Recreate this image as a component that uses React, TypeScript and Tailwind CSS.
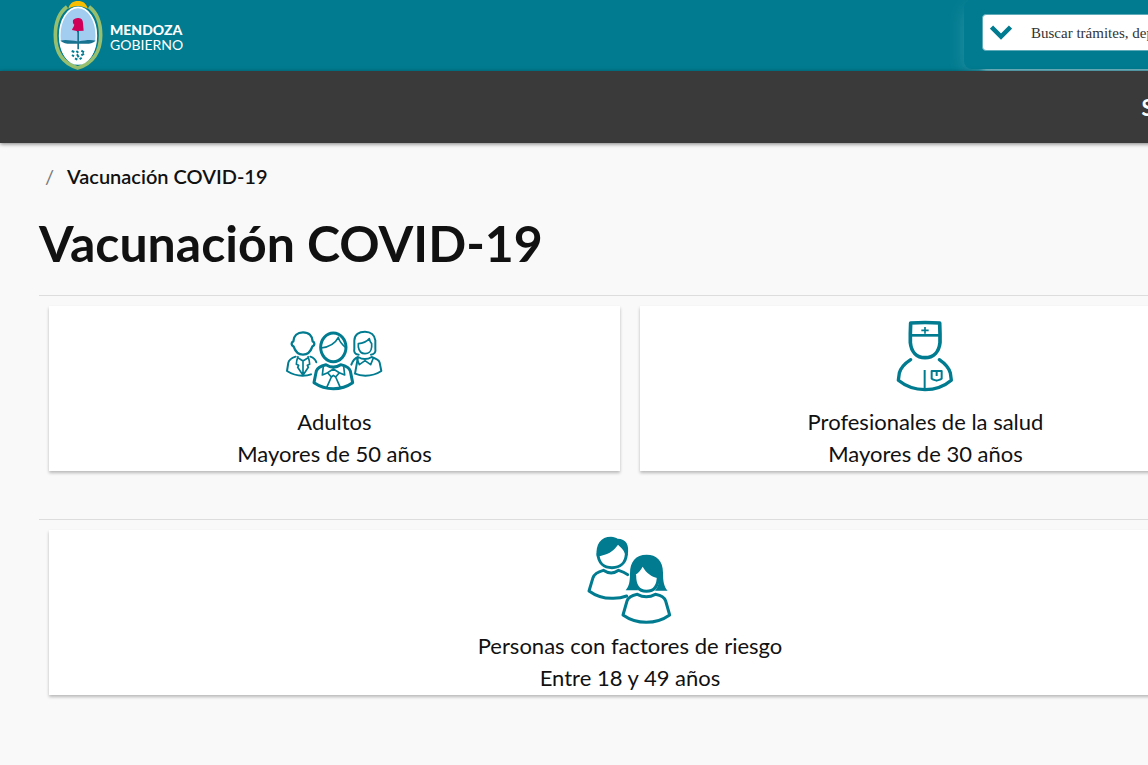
import type { ReactNode } from "react";

const TEAL = "#007b90";

function Crest() {
  return (
    <svg viewBox="40 0 150 213" className="h-[71px] w-[50px]" aria-hidden="true">
      <path d="M86 26C90 10 100 3 115 3s25 7 29 23c-20-11-40-11-58 0z" fill="#f9be00" />
      <path d="M82 20C58 38 47 70 47 106c0 48 21 84 67 98 46-14 69-50 69-98 0-36-11-68-35-86" fill="none" stroke="#97bf6e" strokeWidth="11" />
      <ellipse cx="115" cy="107" rx="55" ry="85" fill="#a3cdf0" stroke="#fff" strokeWidth="5" />
      <path d="M61 124h108c-3 44-26 67-54 67s-51-23-54-67z" fill="#fff" />
      <path d="M62 122c18-4 32 0 51 2V90h5v34c18-3 34-6 50-2-14 14-34 8-50 9v17h-5v-17c-17-1-35 5-51-9z" fill="#17738f" />
      <path d="M100 61c2-5 11-8 17-7 9 1 13 6 13 16l2 22-17 1v5l-4-5-14-3c0-5 6-9 7-16-4-2-5-7-4-13z" fill="#cf0058" />
      <path d="M96 153l8 3M110 153l6 5M125 152l8 5M97 165l6 4M112 163l5 9M125 166l8-5M106 175l7 4M120 178l6-5" stroke="#007b90" strokeWidth="6" />
    </svg>
  );
}

function AdultsIcon() {
  return (
    <svg viewBox="0 -42 360 300" className="h-[100px] w-[120px]" fill="none" stroke={TEAL} strokeWidth="6" strokeLinecap="round" strokeLinejoin="round" aria-hidden="true">
      {/* left */}
      <path d="M84 37c18 0 28 11 29 27 7 3 7 12-1 16-5 15-15 24-28 24s-23-9-28-24c-8-4-8-13-1-16 1-16 12-27 29-27z" strokeWidth="7" />
      <path d="M62 110c-12 4-20 8-22 18l-4 25c14 9 29 14 46 14 10 0 19-1 26-4M106 110c9 3 15 7 18 17" />
      <path d="M84 122v44M69 110c-4 10-5 17-5 23l7 3-3 6 16 24 16-24-3-6 7-3c0-6-1-13-5-23M71 115l13 8 13-8" strokeWidth="5" />
      {/* centre */}
      <ellipse cx="175" cy="82" rx="38" ry="43" strokeWidth="9" />
      <path d="M138 84c24-3 43-14 52-32 4 16 13 23 23 31" strokeWidth="5" />
      <path d="M153 134c-17 4-26 8-29 19l-7 35c18 12 38 18 58 18 22 0 41-6 58-18l-7-35c-3-11-13-15-29-19-13 9-30 9-44 0z" strokeWidth="9" />
      <path d="M145 139l-3 26 16-7 17-11 18 11 16 7-3-26M158 158l11 13-14 32M193 158l-11 13 14 32M169 171l6-5 7 5" strokeWidth="5" />
      {/* right */}
      <path d="M251 104c-12-1-15-9-13-18V61c1-17 14-26 32-26 17 0 29 10 31 26v25c2 10-2 17-13 18" strokeWidth="6" />
      <path d="M250 71v10c2 12 9 20 20 20s19-8 20-20V71c-4-4-6-9-7-15-8 9-18 14-33 15z" strokeWidth="5" />
      <path d="M249 111c-10 4-15 9-20 23M240 161c9 4 20 6 31 6 18 0 33-4 48-14l-5-25c-2-9-12-13-24-17-13 8-27 8-41 0z" />
      <path d="M245 114l8 20 17-12 17 12 8-20" strokeWidth="5" />
    </svg>
  );
}

function NurseIcon() {
  return (
    <svg viewBox="-42 -13 360 300" className="h-[100px] w-[120px]" fill="none" stroke={TEAL} strokeWidth="11" strokeLinecap="round" strokeLinejoin="round" aria-hidden="true">
      <path d="M91 70l1-32q43-3 87 0l1 32v27c-3 28-20 45-45 45s-41-17-44-45z" />
      <path d="M91 75h89" strokeWidth="8" strokeLinecap="butt" />
      <path d="M135 50v20M124 60h22" strokeWidth="5" strokeLinecap="butt" />
      <path d="M92 148c-20 13-30 25-34 40l-3 22c22 18 50 28 80 28 31 0 58-10 79-28l-3-22c-4-15-14-27-33-40" strokeWidth="10" />
      <path d="M134 179v59M155 182v23c3 4 11 4 15 6 5-2 12-2 15-6v-23zM170 179v18" strokeWidth="6" strokeLinecap="butt" />
    </svg>
  );
}

function CoupleIcon() {
  return (
    <svg viewBox="-15 0 360 300" className="h-[100px] w-[120px]" fill="none" stroke={TEAL} strokeWidth="9" strokeLinecap="round" strokeLinejoin="round" aria-hidden="true">
      <path d="M69 72c1 27 18 41 42 41s41-14 43-40" />
      <path d="M65 79c-4-37 13-59 43-59 9 0 15 3 20 6 25 1 36 17 30 50l-7 2c-2-16-9-22-22-34-13 20-32 32-64 35z" fill={TEAL} stroke="none" />
      <path d="M158 134c-9-7-16-10-27-13-14 10-31 10-46 0-19 5-27 11-31 22l-12 40c22 16 46 23 73 22 15 0 27-2 40-7" />
      <path d="M179 136c0 32 12 48 35 48s36-15 36-46" />
      <path d="M152 181c10-11 13-25 13-51 0-35 17-56 50-56 29 0 49 17 49 54 0 26 3 42 14 54h-38c8-9 12-18 11-37-20-4-37-15-48-35-6 11-12 19-24 26 0 19 3 33 11 45z" fill={TEAL} stroke="none" />
      <path d="M187 193c-18 4-27 8-31 20l-12 42c21 15 44 22 70 22s49-7 70-22l-12-42c-4-12-12-16-31-20-17 9-37 9-54 0z" />
    </svg>
  );
}

function Card({ icon, title, detail }: { icon: ReactNode; title: string; detail: string }) {
  return (
    <a
      href="#"
      className="flex flex-1 flex-col items-center bg-white pb-px text-center text-[22px] leading-8 text-[#111] shadow-[0_2px_3px_rgba(0,0,0,0.26)]"
    >
      {icon}
      <span>{title}</span>
      <span>{detail}</span>
    </a>
  );
}

export default function App() {
  return (
    <div className="min-h-screen overflow-x-hidden bg-[#f9f9f9] font-['Lato',sans-serif] text-[#111]">
      <div className="min-w-[1260px]">
        <header className="flex h-[71px] justify-between overflow-hidden bg-[#007b90]">
          <a href="#" className="flex items-center gap-[7px] pl-[53px] text-white">
            <Crest />
            <span className="flex flex-col pt-[3px] text-[14px] leading-[15px]">
              <span className="font-black">MENDOZA</span>
              <span>GOBIERNO</span>
            </span>
          </a>

          <form className="h-[69px] w-[296px] rounded-lg bg-[#007b90] px-[18px] pt-[14px] shadow-[0_6px_20px_-4px_rgba(255,255,255,0.25),16px_2px_4px_rgba(255,255,255,0.45)]">
            <div className="flex h-[37px] items-center rounded border border-[#5fabba] bg-white">
              <button type="button" aria-label="Categorías" className="flex h-full w-9 shrink-0 items-center justify-center">
                <svg viewBox="0 0 22 15" className="h-[15px] w-[22px]" fill="none" stroke={TEAL} strokeWidth="4.5" aria-hidden="true">
                  <path d="M1.5 2L11 11.500L20.500 2" />
                </svg>
              </button>
              <input
                type="text"
                aria-label="Buscar"
                placeholder="Buscar trámites, dependencias"
                className="h-full min-w-0 flex-1 pt-0.5 pl-3 font-['Liberation_Serif',serif] text-[15px] text-[#333] outline-none placeholder:text-[#333]"
              />
            </div>
          </form>
        </header>

        <nav className="relative flex h-[72px] items-center justify-end bg-[#3a3a3a] pr-[65px] shadow-[0_1px_4px_rgba(0,0,0,0.5)]">
          <a href="#" className="text-[22px] font-bold text-white">
            Salud
          </a>
        </nav>

        <main className="px-[39px] pt-4">
          <div className="flex items-center text-xl leading-[34px]">
            <span className="w-7 pl-[6px] text-[#777]">/</span>
            <span className="font-semibold">Vacunación COVID-19</span>
          </div>
          <h1 className="mt-5 text-[50px] font-bold leading-[60px]">Vacunación COVID-19</h1>

          <section className="mt-[22px] flex gap-5 border-t border-[#ddd] px-[10px] pt-[10px] pb-12">
            <Card icon={<AdultsIcon />} title="Adultos" detail="Mayores de 50 años" />
            <Card icon={<NurseIcon />} title="Profesionales de la salud" detail="Mayores de 30 años" />
          </section>
          <section className="flex border-t border-[#ddd] px-[10px] pt-[10px] pb-12">
            <Card icon={<CoupleIcon />} title="Personas con factores de riesgo" detail="Entre 18 y 49 años" />
          </section>
        </main>
      </div>
    </div>
  );
}
